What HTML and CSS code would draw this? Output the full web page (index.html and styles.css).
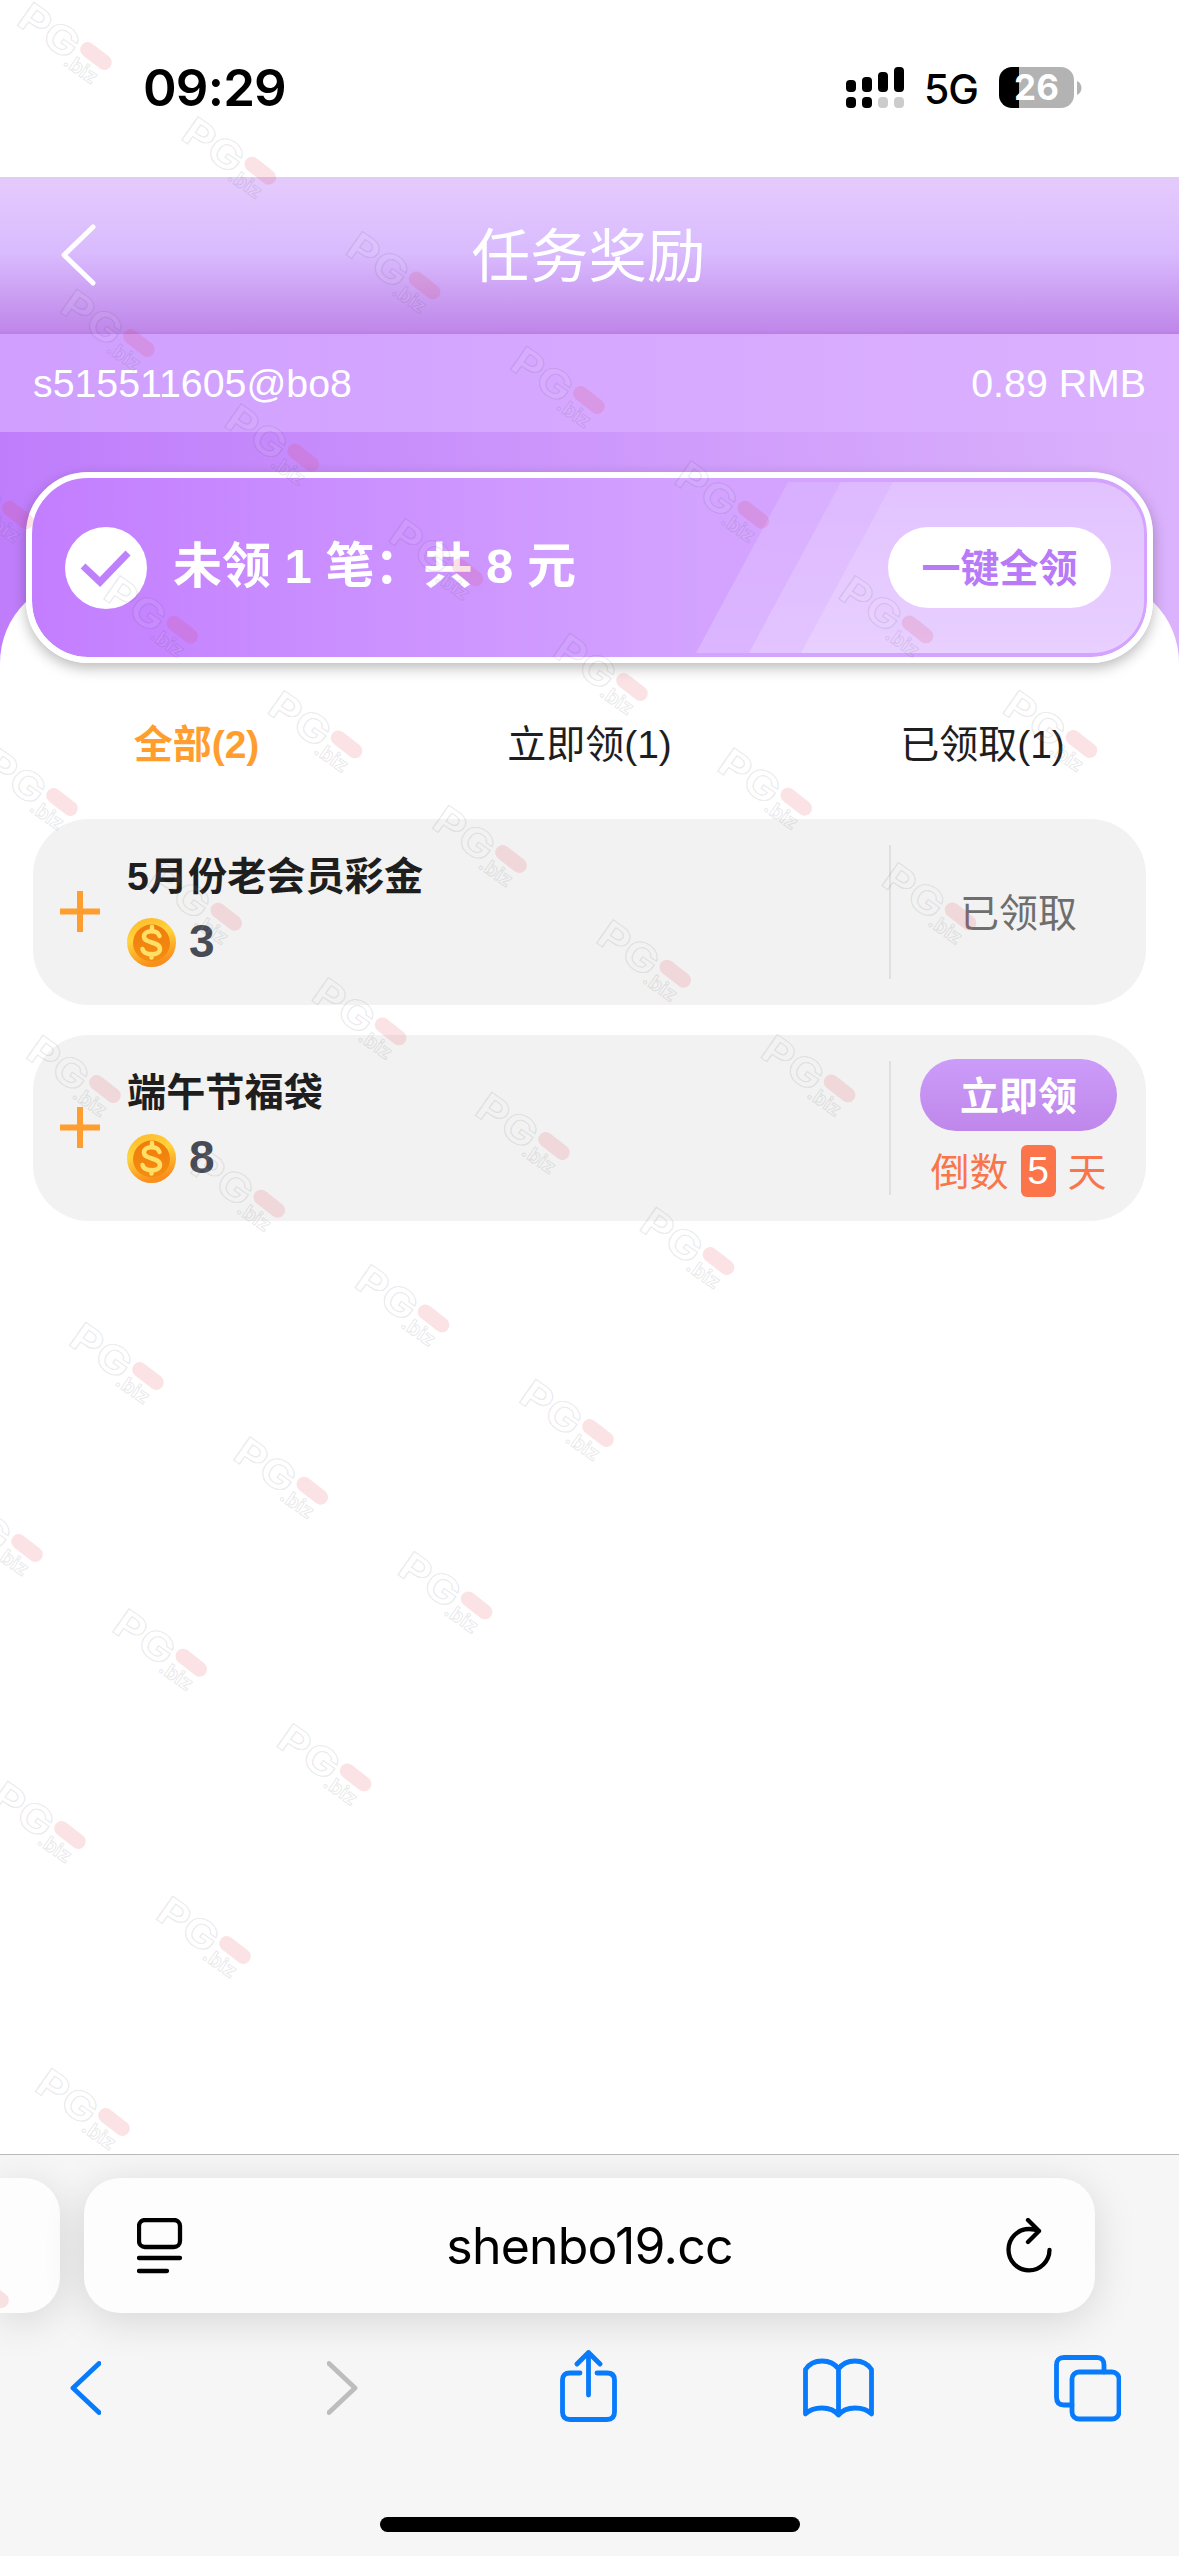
FILE: index.html
```html
<!DOCTYPE html>
<html lang="zh-CN">
<head>
<meta charset="utf-8">
<title>任务奖励</title>
<link rel="stylesheet" href="styles.css">
</head>
<body>
<div class="screen">
  <header class="status">
    <span class="clock">09:29</span>
    <div class="status-right">
      <svg class="signal" width="58" height="41" viewBox="0 0 58 41">
        <rect x="0" y="13" width="10" height="12" rx="4"/><rect x="16" y="10" width="10" height="15" rx="4"/><rect x="32" y="5" width="10" height="20" rx="4"/><rect x="48" y="0" width="10" height="25" rx="4"/>
        <rect x="0" y="30" width="10" height="11" rx="4"/><rect x="16" y="30" width="10" height="11" rx="4"/><rect x="32" y="30" width="10" height="11" rx="4" fill="#ccc"/><rect x="48" y="30" width="10" height="11" rx="4" fill="#ccc"/>
      </svg>
      <span class="network">5G</span>
      <span class="battery">26</span>
      <svg class="battery-tip" width="5" height="14" viewBox="0 0 5 14"><path d="M0 0C6 3 6 11 0 14Z" fill="#b3b3b3"/></svg>
    </div>
  </header>

  <nav class="titlebar">
    <svg class="back" width="38" height="62" viewBox="0 0 38 62"><path d="M33 3 4 31 33 59"/></svg>
    <h1>任务奖励</h1>
  </nav>

  <main class="page">
    <div class="account"><span>s515511605@bo8</span><span>0.89 RMB</span></div>
    <section class="banner">
      <svg class="stripes" width="460" height="171" viewBox="0 0 460 171">
        <defs><linearGradient id="shine" x1="0" y1="0" x2="0" y2="1"><stop offset="0" stop-color="#fff" stop-opacity=".13"/><stop offset="1" stop-color="#fff" stop-opacity=".2"/></linearGradient></defs>
        <path fill="url(#shine)" d="M104 0H460V171H12Z"/><path fill="url(#shine)" d="M157 0H460V171H65Z"/><path fill="url(#shine)" d="M209 0H460V171H117Z"/>
      </svg>
      <svg class="check" width="82" height="82" viewBox="0 0 82 82"><circle cx="41" cy="41" r="41" fill="#fff"/><path d="M18 39 35 55 63 26" fill="none" stroke="#bf80fb" stroke-width="7"/></svg>
      <p class="banner-text">未领 1 笔：共 8 元</p>
      <button class="claim-all">一键全领</button>
    </section>
    <div class="sheet">
      <div class="tabs"><span class="tab active">全部(2)</span><span class="tab">立即领(1)</span><span class="tab">已领取(1)</span></div>
      <ul class="tasks">
        <li class="task">
          <svg class="plus" width="40" height="41" viewBox="0 0 40 41"><path d="M20 0V41M0 20.5H40"/></svg>
          <div class="info">
            <h2>5月份老会员彩金</h2>
            <div class="amount">
              <svg width="49" height="49" viewBox="0 0 49 49">
                <defs>
                  <linearGradient id="rim" x1="0" y1="0" x2=".3" y2="1"><stop offset="0" stop-color="#ffb52a"/><stop offset=".45" stop-color="#ffd43c"/><stop offset="1" stop-color="#f9901c"/></linearGradient>
                  <linearGradient id="face" x1="0" y1="0" x2="0" y2="1"><stop offset="0" stop-color="#ee7d0b"/><stop offset="1" stop-color="#f58c12"/></linearGradient>
                </defs>
                <g id="coin"><circle cx="24.500" cy="24.500" r="24.500" fill="url(#rim)"/><circle cx="24.500" cy="25" r="18.500" fill="url(#face)"/><path d="M32.500 18C31 11.500 17 11.500 17 18.500C17 26 33 23 33 31C33 38 17 38 15.500 31M25 9V13M24.500 36V39.500" fill="none" stroke="#ffe066" stroke-width="4.500" stroke-linecap="round"/></g>
              </svg>
              <b>3</b>
            </div>
          </div>
          <div class="state"><span class="done">已领取</span></div>
        </li>
        <li class="task">
          <svg class="plus" width="40" height="41" viewBox="0 0 40 41"><path d="M20 0V41M0 20.500H40"/></svg>
          <div class="info">
            <h2>端午节福袋</h2>
            <div class="amount">
              <svg width="49" height="49" viewBox="0 0 49 49"><use href="#coin"/></svg>
              <b>8</b>
            </div>
          </div>
          <div class="state">
            <button class="claim">立即领</button>
            <p class="countdown"><span>倒数</span><b>5</b><span>天</span></p>
          </div>
        </li>
      </ul>
    </div>
  </main>

  <footer class="browser">
    <div class="address-row">
      <div class="prev-tab"></div>
      <div class="address">
        <svg class="reader" width="46" height="56" viewBox="0 0 46 56"><rect x="2" y="2" width="41" height="27" rx="6"/><path d="M2 40H43M2 53H30"/></svg>
        <span class="url">shenbo19.cc</span>
        <svg class="reload" width="46" height="56" viewBox="0 0 46 56"><path d="M33 13C29 11 25.500 11 23 11A20.500 20.700 0 1 0 43.500 32M22 2 33 13 22 24"/></svg>
      </div>
    </div>
    <div class="toolbar">
      <svg width="31" height="54" viewBox="0 0 31 54"><path d="M29 2.500 3 27 29 51.500"/></svg>
      <svg class="off" width="31" height="54" viewBox="0 0 31 54"><path d="M2 2.500 28 27 2 51.500"/></svg>
      <svg class="share" width="57" height="72" viewBox="0 0 57 72"><path d="M20 23H10Q2.500 23 2.500 30V62Q2.500 69.500 10 69.500H47Q54.500 69.500 54.500 62V30Q54.500 23 47 23H37M28.500 45V3M17 14 28.500 2.500 40 14"/></svg>
      <svg width="71" height="60" viewBox="0 0 71 60"><path d="M35.500 11Q30 3 19 3Q8 3 2.500 11.500V56Q8 50 19 50Q30 50 35.500 57Q41 50 52 50Q63 50 68.500 56V11.500Q63 3 52 3Q41 3 35.500 11V57"/></svg>
      <svg width="67" height="67" viewBox="0 0 67 67"><rect x="18" y="17" width="47" height="47" rx="7"/><path d="M50 17V10Q50 2.500 43 2.500H10Q2.500 2.500 2.500 10V42Q2.500 50 10 50H18"/></svg>
    </div>
    <div class="home"></div>
  </footer>

  <svg class="watermark" width="1179" height="2556" viewBox="0 0 1179 2556">
    <defs>
      <g id="mark">
        <g transform="rotate(35)">
          <text class="wm-big" x="-85" y="20" textLength="65" lengthAdjust="spacingAndGlyphs">PG</text>
          <text class="wm-small" x="-23" y="26">.biz</text>
        </g>
        <rect class="wm-pill" x="-18" y="-7.500" width="36" height="15" rx="7.500" transform="rotate(38)"/>
      </g>
      <g id="m3"><use href="#mark"/><use href="#mark" x="164.300" y="114.700"/><use href="#mark" x="328.600" y="229.400"/></g>
    </defs>
    <use href="#m3" x="96" y="56"/><use href="#m3" x="589" y="400"/><use href="#mark" x="1081.500" y="744"/>
    <use href="#m3" x="139" y="343"/><use href="#m3" x="632" y="687"/>
    <use href="#m3" x="18" y="515"/><use href="#m3" x="511" y="859"/>
    <use href="#m3" x="62" y="802"/><use href="#mark" x="554" y="1146"/><use href="#mark" x="718.500" y="1261"/>
    <use href="#m3" x="105" y="1089"/><use href="#mark" x="598" y="1433"/>
    <use href="#m3" x="148" y="1376"/>
    <use href="#m3" x="27" y="1548"/>
    <use href="#mark" x="70" y="1835"/><use href="#mark" x="235" y="1950"/>
    <use href="#mark" x="114" y="2122"/><use href="#mark" x="-7" y="2294"/>
  </svg>
</div>
</body>
</html>
```
FILE: styles.css
```css
* { box-sizing: border-box; margin: 0; padding: 0; }
body { width: 1179px; font-family: "Liberation Sans", "Noto Sans CJK SC", sans-serif; font-size: 39px; color: #1e1e1e; background: #fff; }
button { border: 0; font: inherit; }
svg { display: block; flex: none; }
.screen { position: relative; width: 1179px; height: 2556px; overflow: hidden; display: flex; flex-direction: column; }

.status { height: 177px; display: flex; justify-content: space-between; align-items: center; padding: 0 97px 2px 143px; font-family: Inter, sans-serif; color: #000; }
.clock { font-size: 51px; font-weight: 600; letter-spacing: -.8px; }
.status-right { display: flex; align-items: center; }
.network { font-size: 41px; font-weight: 500; margin: 4px 21px 0 20px; letter-spacing: -1px; line-height: 41px; }
.battery { width: 75px; height: 41px; border-radius: 13px; background: linear-gradient(90deg, #000 20px, #b3b3b3 20px); color: #fff; font-size: 35px; font-weight: 700; line-height: 41px; text-align: center; }
.battery-tip { margin-left: 3px; }

.titlebar { height: 157px; display: grid; grid-template-columns: 120px 1fr 120px; align-items: center; background: linear-gradient(#e3caf8 0, #e3c9fd 6%, #d9bbfe 48%, #bf87e9 98%, #b97fe4 100%); }
.back { margin: -2px 0 0 60px; fill: none; stroke: #fff; stroke-width: 5; stroke-linecap: round; stroke-linejoin: round; }
h1 { font-size: 58.500px; font-weight: 400; color: #fff; text-align: center; line-height: 60px; padding: 2px 2px 0 0; }

.page { flex: 1; background: linear-gradient(90deg, #bf7dfb, #dbb2fc) no-repeat 0 0 / 100% 330px; }
.account { height: 98px; padding: 0 33px; display: flex; justify-content: space-between; align-items: center; color: #fff; background: linear-gradient(90deg, #d09fff, #dcb1ff); }
.account span { font-size: 39.300px; }
.banner { position: relative; z-index: 1; height: 191px; margin: 40px 26px 0; padding: 0 36px 0 33px; display: flex; align-items: center; border: 6px solid #fff; border-radius: 62px; background: linear-gradient(90deg, #c37eff, #d3a3ff 60%); background-clip: padding-box; box-shadow: 0 5px 14px rgba(0,0,0,.27); }
.stripes { position: absolute; right: 3px; top: 4px; border-radius: 0 52px 52px 0; }
.check { position: relative; }
.banner-text { position: relative; flex: 1; margin: -3px 0 0 26px; color: #fff; font-size: 49px; font-weight: 700; line-height: 60px; }
.claim-all { position: relative; width: 223px; height: 81px; padding-bottom: 5px; border-radius: 41px; background: #fff; color: #b97af8; font-weight: 700; }
.sheet { margin-top: -85px; padding-top: 85px; min-height: 500px; border-radius: 85px 85px 0 0; background: #fff; }
.tabs { height: 156px; display: grid; grid-template-columns: repeat(3, 1fr); align-items: center; text-align: center; }
.active { color: #ff9d2e; font-weight: 700; }

.tasks { list-style: none; display: flex; flex-direction: column; gap: 30px; padding: 0 33px; }
.task { height: 186px; display: flex; align-items: center; padding-left: 27px; border-radius: 56px; background: #f2f2f2; }
.plus { margin-top: -2px; stroke: #ff9e30; stroke-width: 6; }
.info { flex: 1; margin-left: 27px; height: 134px; padding-top: 9px; }
h2 { font-size: 39.200px; font-weight: 700; line-height: 46px; }
.amount { display: flex; align-items: center; gap: 13px; margin-top: 18px; color: #474b55; font-size: 46px; }
.amount b { line-height: 46px; margin-top: -3px; }
.state { width: 257px; height: 134px; display: flex; flex-direction: column; align-items: center; justify-content: center; border-left: 2px solid #dfdfdf; }
.done { color: #6e6e6e; margin-top: -5px; }
.claim { flex: none; width: 197px; height: 72px; padding-bottom: 5px; border-radius: 36px; color: #fff; font-weight: 700; background: linear-gradient(#cc9cfa, #bf87ea); }
.countdown { flex: none; display: flex; align-items: center; gap: 12px; margin-top: 14px; height: 52px; color: #f9754b; }
.countdown span { margin-top: -5px; }
.countdown b { width: 35px; height: 52px; border-radius: 6px; background: #fc744a; color: #fff; font-weight: 400; line-height: 52px; text-align: center; }

.browser { height: 402px; border-top: 1px solid #b9b9b9; background: #f6f6f6; overflow: hidden; padding-top: 23px; }
.address-row { display: flex; gap: 24px; }
.prev-tab { width: 60px; height: 135px; border-radius: 0 36px 36px 0; background: #fdfdfd; box-shadow: 0 8px 42px rgba(0,0,0,.13); }
.address { width: 1011px; height: 135px; padding: 0 43px 0 53px; display: flex; align-items: center; justify-content: space-between; border-radius: 36px; background: #fdfdfd; box-shadow: 0 8px 42px rgba(0,0,0,.13); }
.reader, .reload { fill: none; stroke: #000; stroke-width: 4.300; stroke-linecap: round; stroke-linejoin: round; }
.url { font-family: Inter, sans-serif; font-size: 50px; color: #000; letter-spacing: -.8px; margin-right: 10px; }
.toolbar { height: 150px; padding-left: 70px; display: grid; grid-template-columns: 257px 233px 243px 251px 67px; align-items: center; fill: none; stroke: #077bfb; stroke-width: 4.800; stroke-linecap: round; stroke-linejoin: round; }
.off { stroke: #bdbdbd; }
.share { margin-top: -4px; }
.home { width: 420px; height: 15px; margin: 54px auto 0; border-radius: 8px; background: #000; }

.watermark { position: absolute; z-index: 2; left: 0; top: 0; pointer-events: none; }
.watermark text { fill: rgba(255,255,255,.06); stroke: rgba(60,50,70,.1); stroke-width: 1.300; font-family: Inter, sans-serif; font-weight: 700; }
.wm-big { font-size: 39px; }
.wm-small { font-size: 20px; }
.wm-pill { fill: rgba(226,60,80,.15); }
```
